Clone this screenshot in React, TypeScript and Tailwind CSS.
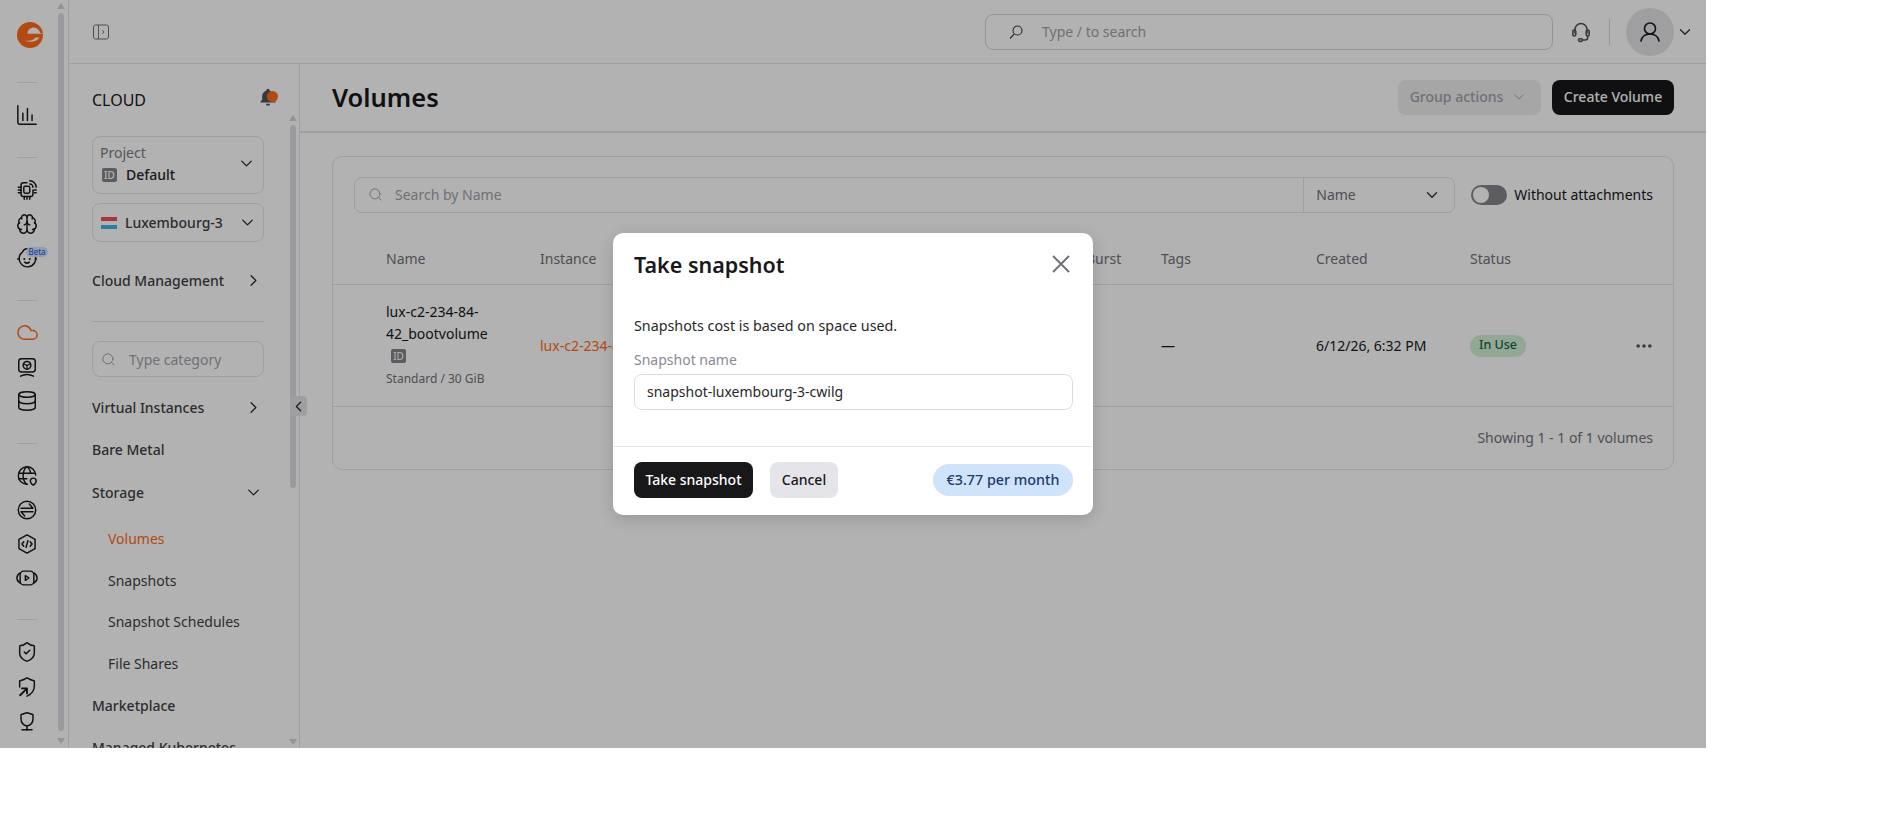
import React from "react";
import { Brain, Cloud, Database, ShieldCheck, ChevronDown, ChevronRight, ChevronLeft, Search, Ellipsis } from "lucide-react";

function Ico({ children, className = "" }: { children: React.ReactNode; className?: string }) {
  return (
    <svg viewBox="0 0 24 24" fill="none" stroke="currentColor" strokeWidth={1.6} strokeLinecap="round" strokeLinejoin="round" className={className}>
      {children}
    </svg>
  );
}

const railIcon = "w-[22px] h-[22px] text-[#18181b]";

function Logo() {
  return (
    <svg viewBox="0 0 26 28" className="w-[26px] h-[28px] ml-[6px]">
      <circle cx="13" cy="14" r="13" fill="#ff6b1a" />
      <path d="M10.500 12.800C10 8 16 5 20 7.500C22 9 23 10.500 23.300 12L26 12.200V12.800Z" fill="#fff" />
      <path d="M22.500 16.500C20 20.500 14 22 8 19.800C12 20 16.500 19.500 18.500 16.500Z" fill="#fff" />
      <path d="M2 22C6 27.500 13 28 17 27.500C12 29.500 4 28 2 22Z" fill="#fff" />
    </svg>
  );
}

function RailDivider({ className }: { className: string }) {
  return <div className={`w-[20px] h-px bg-[#e4e4e7] ${className}`} />;
}

function Cell({ children, className = "" }: { children: React.ReactNode; className?: string }) {
  return <div className={`relative h-[34px] w-full flex items-center justify-center ${className}`}>{children}</div>;
}

function TriUp() {
  return <svg viewBox="0 0 8 6" className="w-[8px] h-[6px] fill-[#d4d4d8]"><path d="M4 0l4 6H0z" /></svg>;
}
function TriDown() {
  return <svg viewBox="0 0 8 6" className="w-[8px] h-[6px] fill-[#d4d4d8]"><path d="M4 6l4-6H0z" /></svg>;
}

function Rail() {
  return (
    <div className="w-[69px] shrink-0 h-full flex border-r border-[#e4e4e7]">
      <div className="w-[54px] flex flex-col items-center pt-[21px]">
        <Logo />
        <RailDivider className="mt-[33px]" />
        <Cell className="mt-[15px]">
          <Ico className={railIcon}><path d="M2 2v17.500A2.500 2.500 0 0 0 4.500 22H22" /><path d="M7.500 10v8" /><path d="M12.500 5v13" /><path d="M17.500 12v6" /></Ico>
        </Cell>
        <RailDivider className="mt-[25px]" />
        <Cell className="mt-[15px]">
          <Ico className={railIcon}><path d="M12 4H8a2.500 2.500 0 0 0-2.500 2.500v10A2.500 2.500 0 0 0 8 19h8a2.500 2.500 0 0 0 2.500-2.500V12" /><rect x="8.500" y="8" width="6.500" height="7.500" rx="1.500" /><path d="M2.500 9h3M2.500 12h3M2.500 15h3M9 19v3M12 19v3M15 19v3M20 12h2M20 15h2" /><path d="M15 2a7 7 0 0 1 7 7" /><path d="M15 5.500a3.500 3.500 0 0 1 3.500 3.500" /></Ico>
        </Cell>
        <Cell>
          <Brain className={railIcon} strokeWidth={1.6} />
        </Cell>
        <Cell>
          <Ico className={railIcon}><path d="M15.500 4.200A9 9 0 1 1 7 5.500C8 3.500 10 2 11.500 2c1 0 1.500.7 1.500 1.300" /><path d="M9 13h.01M15 13h.01" strokeWidth={2.2} /><path d="M9.500 16.500c1.500 1.300 3.500 1.300 5 0" /><path d="M3 13H1.800M22.200 13H21" /></Ico>
          <span className="absolute left-[26px] top-[6px] h-[10px] w-[22px] rounded-full bg-[#cfe2fb] text-[#1d4ed8] text-[8px] leading-[10px] text-center">Beta</span>
        </Cell>
        <RailDivider className="mt-[25px]" />
        <Cell className="mt-[14px]">
          <Cloud className="w-[23px] h-[23px] text-[#ff6b1a]" strokeWidth={1.6} />
        </Cell>
        <Cell className="mt-[1px]">
          <Ico className={railIcon}><rect x="3" y="3" width="18" height="14.500" rx="3" /><circle cx="12" cy="10.200" r="4.200" /><path d="M12 10.500v4M12 10.500l3.500-2M12 10.500l-3.500-2" strokeWidth={1.3} /><path d="M5 22c4-2.500 10-2.500 14 0" /></Ico>
        </Cell>
        <Cell>
          <Database className={railIcon} strokeWidth={1.6} />
        </Cell>
        <RailDivider className="mt-[25px]" />
        <Cell className="mt-[15px]">
          <Ico className={railIcon}><path d="M12.500 21A9.500 9.500 0 1 1 21.500 11" /><path d="M3 9h18M2.800 15h9M11.500 2c-5 5-5 14 0 19M12.500 2c2 2 3.200 4.500 3.700 7" /><path d="M22 17.500c0 2-2.500 4.200-3.200 4.500-.7-.3-3.200-2.500-3.200-4.500a3.200 3.200 0 0 1 6.400 0z" /></Ico>
        </Cell>
        <Cell>
          <Ico className={railIcon}><circle cx="12" cy="12" r="9.500" /><path d="M5.500 10h13l-4-4.500" /><path d="M18.500 14h-13l4 4.500" /></Ico>
        </Cell>
        <Cell>
          <Ico className={railIcon}><path d="M12 2l8.800 5v10L12 22l-8.800-5V7z" /><path d="M8.500 9.500L6.500 12l2 2.500M15.500 9.500l2 2.500-2 2.500M13 8.500l-2 7" /></Ico>
        </Cell>
        <Cell>
          <Ico className={railIcon}><rect x="4.500" y="4.500" width="15" height="15" rx="4" /><path d="M4.500 6.500C2 8 1 10 1 12s1 4 3.500 5.500M19.500 6.500C22 8 23 10 23 12s-1 4-3.500 5.500" /><path d="M10.200 9.500v5l4-2.500z" /></Ico>
        </Cell>
        <RailDivider className="mt-[24px]" />
        <Cell className="mt-[15px]">
          <ShieldCheck className={railIcon} strokeWidth={1.6} />
        </Cell>
        <Cell className="mt-[1px]">
          <Ico className={railIcon}><path d="M4 12V5.500c3-1 5.500-2 8-3.500 2.500 1.500 5 2.500 8 3.500V11c0 5.500-3.500 9-8 11" /><path d="M4.500 21l7-7" strokeWidth={2} /><path d="M6.500 13.500h5.500V19" strokeWidth={2} /></Ico>
        </Cell>
        <Cell>
          <Ico className={railIcon}><path d="M12 3c-3 1-5 1.500-6.500 2v5c0 4 3 6.500 6.500 7.500 3.500-1 6.500-3.500 6.500-7.500V5C17 4.500 15 4 12 3z" /><path d="M12 17.500V22M6.500 21.500h11" /></Ico>
        </Cell>
      </div>
      <div className="w-[14px] flex flex-col items-center pt-[3px]">
        <TriUp />
        <div className="w-[6px] h-[718px] mt-[4px] rounded-full bg-[#dddce3]" />
        <div className="mt-[7px]"><TriDown /></div>
      </div>
    </div>
  );
}

function IdBadge({ className = "" }: { className?: string }) {
  return <span className={`inline-flex items-center justify-center w-[15px] h-[14px] rounded-[2px] bg-[#85848c] text-white text-[10px] leading-none ${className}`}>ID</span>;
}

function NavRow({ label, className = "", icon, tone = "text-[#3f3f46]", indent = false }: { label: string; className?: string; icon?: "right" | "down"; tone?: string; indent?: boolean }) {
  return (
    <div className={`h-[24px] flex items-center justify-between text-[14px] ${tone} ${indent ? "pl-[16px]" : "font-medium"} ${className}`}>
      <span className="whitespace-nowrap">{label}</span>
      {icon === "right" && <ChevronRight className="w-[19px] h-[19px] mr-[1px] text-[#27272a]" strokeWidth={1.6} />}
      {icon === "down" && <ChevronDown className="w-[19px] h-[19px] mr-[1px] text-[#27272a]" strokeWidth={1.6} />}
    </div>
  );
}

function Sidebar() {
  return (
    <div className="relative w-[231px] shrink-0 h-full border-r border-[#e4e4e7] flex flex-col">
      <div className="h-[48px] shrink-0 pl-[23px] pr-[21px] pt-[24px] flex items-center justify-between">
        <span className="text-[16px] text-[#18181b]">CLOUD</span>
        <span className="relative w-[20px] h-[20px] -mt-[6px]">
          <svg viewBox="0 0 24 24" className="w-[20px] h-[20px] fill-[#52525b]"><path d="M12 2a2 2 0 0 0-2 2v.6A7 7 0 0 0 5 11v4l-2.500 3.500h19L19 15v-4a7 7 0 0 0-5-6.400V4a2 2 0 0 0-2-2zM9.500 20a2.500 2.500 0 0 0 5 0z" /></svg>
          <span className="absolute left-[9px] top-[4px] w-[11px] h-[11px] rounded-full bg-[#ff6b1a]" />
        </span>
      </div>
      <div className="flex flex-1 min-h-0">
        <div className="w-[218px] shrink-0 pl-[23px] pr-[23px] overflow-hidden h-full">
          <div className="mt-[24px] h-[58px] rounded-[8px] border border-[#e4e4e7] pl-[7px] pr-[7px] flex items-center justify-between">
            <div>
              <div className="text-[14px] leading-[18px] text-[#7c7c86] -mt-[2px]">Project</div>
              <div className="flex items-center gap-[9px] pl-[2px] mt-[4px] text-[14px] leading-[18px] font-medium text-[#27272a]"><IdBadge />Default</div>
            </div>
            <ChevronDown className="w-[19px] h-[19px] text-[#27272a] mb-[4px]" strokeWidth={1.6} />
          </div>
          <div className="mt-[9px] h-[39px] rounded-[8px] border border-[#e4e4e7] pl-[8px] pr-[6px] flex items-center justify-between">
            <div className="flex items-center gap-[8px] text-[14px] text-[#3f3f46] font-medium">
              <span className="w-[16px] h-[12px] flex flex-col">
                <span className="h-[4px] bg-[#ef5350]" />
                <span className="h-[4px] bg-white" />
                <span className="h-[4px] bg-[#38b6e8]" />
              </span>
              Luxembourg-3
            </div>
            <ChevronDown className="w-[19px] h-[19px] text-[#27272a]" strokeWidth={1.6} />
          </div>
          <NavRow label="Cloud Management" icon="right" className="mt-[26px]" />
          <div className="mt-[29px] h-px bg-[#e4e4e7]" />
          <div className="mt-[19px] h-[36px] rounded-[8px] border border-[#e4e4e7] pl-[8px] flex items-center gap-[13px] text-[14px] text-[#a1a1aa]">
            <Search className="w-[15px] h-[15px] text-[#a1a1aa]" strokeWidth={1.6} />
            Type category
          </div>
          <NavRow label="Virtual Instances" icon="right" className="mt-[18px]" />
          <NavRow label="Bare Metal" className="mt-[18px]" />
          <NavRow label="Storage" icon="down" className="mt-[19px]" />
          <NavRow label="Volumes" indent tone="text-[#ff6b1a]" className="mt-[22px]" />
          <NavRow label="Snapshots" indent className="mt-[18px]" />
          <NavRow label="Snapshot Schedules" indent className="mt-[17px]" />
          <NavRow label="File Shares" indent className="mt-[18px]" />
          <NavRow label="Marketplace" className="mt-[18px]" />
          <NavRow label="Managed Kubernetes" className="mt-[18px]" />
        </div>
        <div className="w-[12px] flex flex-col items-center pt-[3px] h-full">
          <TriUp />
          <div className="w-[6px] h-[363px] mt-[4px] rounded-full bg-[#dddce3]" />
          <div className="flex-1" />
          <div className="mb-[3px]"><TriDown /></div>
        </div>
      </div>
      <div className="absolute z-10 left-[221px] top-[332px] w-[17px] h-[20px] rounded-[4px] bg-[#e4e4e7] flex items-center justify-center">
        <ChevronLeft className="w-[17px] h-[17px] text-[#27272a]" strokeWidth={1.8} />
      </div>
    </div>
  );
}

function Header() {
  return (
    <div className="h-[64px] shrink-0 border-b border-[#e4e4e7] flex items-center pl-[24px] pr-[10px]">
      <svg viewBox="0 0 16 16" fill="none" stroke="#71717a" strokeWidth="1" className="w-[16px] h-[16px]">
        <rect x="0.500" y="1" width="15" height="14" rx="2" />
        <path d="M5.500 1v14" />
        <path d="M9 6l2 2-2 2" />
      </svg>
      <div className="ml-[876px] w-[568px] h-[36px] rounded-[8px] border border-[#d4d4d8] pl-[22px] flex items-center text-[14px] text-[#a1a1aa]">
        <svg viewBox="0 0 16 16" fill="none" stroke="#3f3f46" strokeWidth="1.100" className="w-[16px] h-[16px]">
          <circle cx="9.500" cy="6.500" r="4.500" />
          <path d="M6.200 10L2 14.500" />
        </svg>
        <span className="ml-[18px]">Type / to search</span>
      </div>
      <Ico className="ml-[16px] w-[24px] h-[24px] text-[#52525b]"><path d="M6 13V9.500a6 6 0 0 1 12 0V13" /><rect x="3.800" y="10" width="3" height="6" rx="1.500" /><rect x="17.200" y="10" width="3" height="6" rx="1.500" /><path d="M18.700 16v1.500a2.500 2.500 0 0 1-2.500 2.500H13" /><rect x="9.500" y="18.800" width="4" height="2.600" rx="1.300" /></Ico>
      <div className="ml-[16px] w-px h-[26px] bg-[#d4d4d8]" />
      <div className="ml-[16px] w-[48px] h-[48px] rounded-full bg-[#e4e4e7] flex items-center justify-center">
        <Ico className="w-[24px] h-[24px] text-[#18181b]"><circle cx="12" cy="8.500" r="5.500" /><path d="M3 21c1-4.500 4-7 9-7s8 2.500 9 7" /></Ico>
      </div>
      <ChevronDown className="ml-[2px] w-[18px] h-[18px] text-[#27272a]" strokeWidth={1.6} />
    </div>
  );
}

function Main() {
  return (
    <div className="flex-1 min-w-0 h-full flex flex-col">
      <div className="h-[69px] shrink-0 border-b-2 border-[#e4e4e7] pl-[32px] pr-[32px] flex items-center justify-between">
        <h1 className="text-[25.5px] leading-[36px] font-semibold text-[#18181b] -mt-[1px]">Volumes</h1>
        <div className="flex items-center gap-[11px]">
          <div className="w-[143px] h-[35px] pb-[2px] pr-[2px] rounded-[8px] bg-[#eeeef0] text-[14px] font-medium text-[#a1a1aa] flex items-center justify-center gap-[8px]">
            Group actions <ChevronDown className="w-[16px] h-[16px]" strokeWidth={1.4} />
          </div>
          <div className="w-[122px] h-[35px] pb-[2px] rounded-[8px] bg-[#18181b] text-white text-[14px] font-medium flex items-center justify-center">Create Volume</div>
        </div>
      </div>
      <div className="mt-[23px] mx-[32px] h-[314px] rounded-[10px] border border-[#e4e4e7] flex flex-col">
        <div className="mt-[20px] pl-[21px] pr-[20px] flex items-center">
          <div className="flex-1 h-[36px] rounded-[8px] border border-[#e4e4e7] flex">
            <div className="flex-1 flex items-center pl-[13px] pb-[1px] gap-[12px] text-[14px] text-[#a1a1aa]">
              <Search className="w-[15px] h-[15px] text-[#a1a1aa]" strokeWidth={1.6} />
              Search by Name
            </div>
            <div className="w-[151px] border-l border-[#e4e4e7] pl-[12px] pr-[13px] pb-[1px] flex items-center justify-between text-[14px] text-[#71717a]">
              Name
              <ChevronDown className="w-[18px] h-[18px] text-[#27272a]" strokeWidth={1.6} />
            </div>
          </div>
          <div className="ml-[16px] w-[36px] h-[20px] rounded-full bg-[#85848c] p-[2px] flex">
            <span className="w-[16px] h-[16px] rounded-full bg-white" />
          </div>
          <span className="ml-[7px] pb-[1px] text-[14px] text-[#18181b] whitespace-nowrap">Without attachments</span>
        </div>
        <div className="h-[72px] shrink-0 flex items-center pl-[53px] pt-[20px] border-b border-[#e4e4e7] text-[14px] text-[#71717a]">
          <span className="w-[154px]">Name</span>
          <span className="w-[546px]">Instance</span>
          <span className="w-[75px]">Burst</span>
          <span className="w-[155px]">Tags</span>
          <span className="w-[154px]">Created</span>
          <span>Status</span>
        </div>
        <div className="h-[122px] shrink-0 flex items-center pl-[53px] pr-[20px] border-b border-[#e4e4e7] text-[14px] text-[#18181b]">
          <div className="w-[154px] -mt-[2px]">
            <div className="leading-[22px] w-[110px]">lux-c2-234-84-42_bootvolume</div>
            <div className="h-[22px] pl-[5px] flex items-center"><IdBadge /></div>
            <div className="text-[12px] leading-[20px] mt-[2px] text-[#71717a]">Standard / 30 GiB</div>
          </div>
          <div className="w-[621px] text-[#ff6b1a]">lux-c2-234-84-42</div>
          <div className="w-[155px]">—</div>
          <div className="w-[154px]">6/12/26, 6:32 PM</div>
          <div className="flex-1 flex items-center justify-between">
            <span className="h-[22px] px-[9px] rounded-full bg-[#d1efd5] text-[#15663f] text-[12.5px] font-medium flex items-center">In Use</span>
            <Ellipsis className="w-[20px] h-[20px] text-[#52525b] mr-[-1px]" strokeWidth={2.4} />
          </div>
        </div>
        <div className="flex-1 flex items-center justify-end pr-[20px] pb-[2px] text-[14px] text-[#71717a]">Showing 1 - 1 of 1 volumes</div>
      </div>
    </div>
  );
}

function Modal() {
  return (
    <div className="absolute z-30 left-[613px] top-[233px] w-[480px] h-[282px] rounded-[10px] bg-white shadow-[0_4px_16px_rgba(0,0,0,0.15)] flex flex-col">
      <div className="h-[64px] shrink-0 pl-[21px] pr-[23px] flex items-center justify-between">
        <span className="text-[21.5px] font-semibold text-[#18181b]">Take snapshot</span>
        <svg viewBox="0 0 18 18" fill="none" stroke="#71717a" strokeWidth="2" className="w-[18px] h-[18px] -mt-[2px]"><path d="M1 1L17 17M17 1L1 17" /></svg>
      </div>
      <div className="px-[21px] pt-[19px] text-[14.3px] leading-[20px] text-[#27272a]">Snapshots cost is based on space used.</div>
      <div className="px-[21px] mt-[14px] text-[14px] leading-[20px] text-[#8a8a94]">Snapshot name</div>
      <div className="ml-[21px] mr-[20px] mt-[4px] h-[36px] pb-[1px] rounded-[8px] border border-[#dcdce0] pl-[12px] flex items-center text-[14px] text-[#27272a]">snapshot-luxembourg-3-cwilg</div>
      <div className="mt-[36px] h-px mx-[1px] bg-[#e4e4ee]" />
      <div className="flex-1 pl-[21px] pr-[20px] flex items-center pb-[2px]">
        <div className="w-[119px] h-[36px] pb-[1px] rounded-[8px] bg-[#18181b] text-white text-[14px] font-medium flex items-center justify-center">Take snapshot</div>
        <div className="ml-[17px] w-[68px] h-[36px] pb-[1px] rounded-[8px] bg-[#e4e4e9] text-[#18181b] text-[14px] font-medium flex items-center justify-center">Cancel</div>
        <div className="ml-auto w-[140px] h-[32px] pb-[1px] rounded-full bg-[#cfe3fb] text-[#1e3a6e] text-[14.3px] font-medium flex items-center justify-center">€3.77 per month</div>
      </div>
    </div>
  );
}

export default function App() {
  return (
    <div className="relative w-[1706px] h-[748px] overflow-hidden bg-white font-['Noto_Sans',sans-serif]">
      <div className="flex w-full h-full">
        <Rail />
        <div className="flex-1 min-w-0 h-full flex flex-col overflow-hidden">
          <Header />
          <div className="flex flex-1 min-h-0">
            <Sidebar />
            <Main />
          </div>
        </div>
      </div>
      <div className="absolute z-20 inset-0 bg-black/30" />
      <Modal />
    </div>
  );
}
